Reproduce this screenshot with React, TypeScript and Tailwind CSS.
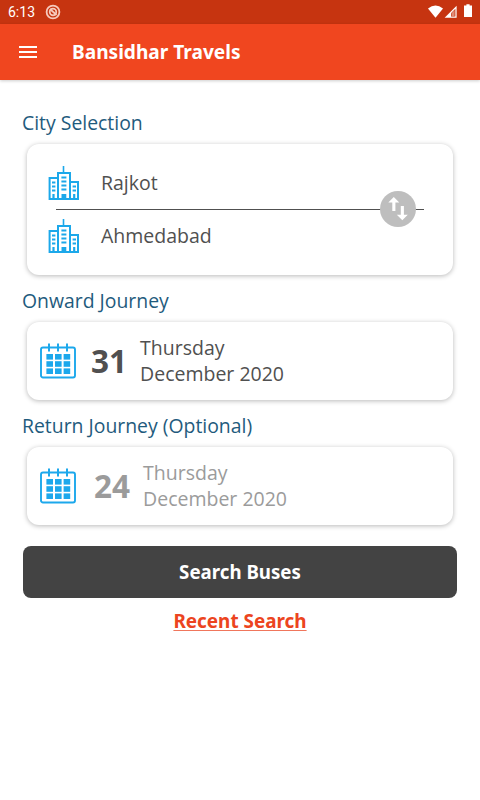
import { useState } from 'react';

const BuildingIcon = () => (
  <svg width="32" height="36" viewBox="0 0 32 36" fill="none" stroke="#1ca8ea" className="shrink-0">
    <path d="M15.5 1V7" strokeWidth="1.6" />
    <path d="M10 34V8H22V34" strokeWidth="2" />
    <path d="M9 13H1.6V34H30V17H22.6" strokeWidth="2" />
    <path d="M13.4 12.5H18.4M13.4 16.5H18.4M13.4 20.5H18.4M13.4 24.5H18.4" strokeWidth="1.8" />
    <path d="M4 17.5H7.4M4 21.5H7.4M4 25.5H7.4M24.6 21.5H28M24.6 25.5H28" strokeWidth="1.8" />
    <path d="M5.5 29V34M26.2 29V34" strokeWidth="2.2" />
    <path d="M15.9 29V34" strokeWidth="4.8" />
  </svg>
);

const CalendarIcon = () => (
  <svg width="36" height="36" viewBox="0 0 36 36" fill="none" stroke="#1ca8ec" className="shrink-0">
    <rect x="1" y="4.5" width="34" height="30" rx="2" strokeWidth="1.9" />
    <path d="M9 0.5V8.5M18 0.5V8.5M27 0.5V8.5" strokeWidth="2" />
    <g fill="#1ca8ec" stroke="none">
      {[11, 18.2, 25.4].map((y) =>
        [6.4, 15, 23.6].map((x) => <rect key={`${x}-${y}`} x={x} y={y} width="6.6" height="5.6" />)
      )}
    </g>
  </svg>
);

const StatusBar = () => (
  <div className="flex h-6 items-center bg-[#c63410] pl-2 pr-2 text-white">
    <span className="font-['Roboto',sans-serif] text-sm leading-6">6:13</span>
    <svg width="16" height="16" viewBox="0 0 16 16" fill="none" stroke="#f6c9bd" className="ml-[10px]">
      <circle cx="8" cy="8" r="6.4" strokeWidth="1.8" />
      <circle cx="8" cy="8" r="3.3" strokeWidth="1.7" />
      <path d="M5 5L11.5 11" strokeWidth="1.8" />
    </svg>
    <svg width="44" height="16" viewBox="0 0 44 16" className="ml-auto">
      <path d="M0 4.6Q7.5 -1.4 15 4.6L7.5 13.7Z" fill="#fff" />
      <path d="M16.6 13.8L28.6 1.8V13.8Z" fill="#fff" />
      <path d="M23 9.2L27.4 4.8V12.6H23Z" fill="#c63410" />
      <path d="M23.6 12.6V9L26.6 6V12.6Z" fill="#df8c78" />
      <path d="M38.4 0.2H41.6V1.5H44V13H36V1.5H38.4Z" fill="#fff" />
    </svg>
  </div>
);

const SectionTitle = ({ title }: { title: string }) => (
  <h2 className="mb-2 h-[26px] text-[19.4px] leading-[26px] text-[#1f5b7d]">{title}</h2>
);

interface DateCardProps {
  day: string;
  weekday: string;
  month: string;
  muted?: boolean;
}

const DateCard = ({ day, weekday, month, muted = false }: DateCardProps) => (
  <button
    className={`mx-[5px] mb-[13px] flex h-[78px] items-center rounded-xl bg-white pl-[13px] text-left shadow-[0_1px_5px_rgba(0,0,0,0.28)] ${
      muted ? 'text-[#9b9b9b]' : 'text-[#505050]'
    }`}
  >
    <CalendarIcon />
    <span className={`text-[31.5px] font-bold ${muted ? 'ml-[18px]' : 'ml-[15px]'}`}>{day}</span>
    <span className="ml-[13px] text-[19.5px] leading-[26px]">
      <span className="block">{weekday}</span>
      <span className="block">{month}</span>
    </span>
  </button>
);

export default function App() {
  const [from, setFrom] = useState('Rajkot');
  const [to, setTo] = useState('Ahmedabad');

  const swapCities = () => {
    setFrom(to);
    setTo(from);
  };

  return (
    <div className="min-h-screen bg-white font-['Open_Sans',sans-serif]">
      <StatusBar />
      <header className="flex h-14 items-center bg-[#f0461f] pl-[19px] text-white shadow-[0_1px_3px_rgba(0,0,0,0.2)]">
        <button aria-label="Menu">
          <svg width="18" height="12" viewBox="0 0 18 12" fill="#fff">
            <path d="M0 0H18V2H0ZM0 5H18V7H0ZM0 10H18V12H0Z" />
          </svg>
        </button>
        <h1 className="ml-[35px] font-['Noto_Sans',sans-serif] text-[19.1px] font-bold">Bansidhar Travels</h1>
      </header>

      <main className="flex flex-col px-[22px] pt-[30px]">
        <SectionTitle title="City Selection" />
        <div className="relative mx-[5px] mb-[13px] h-[131px] rounded-xl bg-white pl-[21px] pr-[29px] pt-[13px] text-[19.5px] text-[#505050] shadow-[0_1px_5px_rgba(0,0,0,0.28)]">
          <div className="flex h-[52px] items-center">
            <BuildingIcon />
            <span className="ml-[21px]">{from}</span>
          </div>
          <div className="ml-2 h-px bg-[#505050]" />
          <div className="flex h-[52px] items-center">
            <BuildingIcon />
            <span className="ml-[21px]">{to}</span>
          </div>
          <button
            aria-label="Swap cities"
            onClick={swapCities}
            className="absolute right-[37px] top-[47px] flex h-9 w-9 items-center justify-center rounded-full bg-[#bebebe]"
          >
            <svg width="36" height="36" viewBox="0 0 36 36" fill="#fff">
              <path d="M13.8 6L19.3 11.4H15.4V20H12.3V11.4H8.3Z" />
              <path d="M22.3 29.2L16.8 23.8H20.8V15H23.9V23.8H27.8Z" />
            </svg>
          </button>
        </div>

        <SectionTitle title="Onward Journey" />
        <DateCard day="31" weekday="Thursday" month="December 2020" />

        <SectionTitle title="Return Journey (Optional)" />
        <DateCard day="24" weekday="Thursday" month="December 2020" muted />

        <button className="mx-px mt-2 h-[52px] rounded-lg bg-[#434343] font-['Noto_Sans',sans-serif] text-[18.7px] font-bold text-white">
          Search Buses
        </button>
        <button className="mt-[10px] self-center font-['Noto_Sans',sans-serif] text-[18.9px] font-bold leading-[26px] text-[#ec4420] underline decoration-[#f0765c] decoration-1 underline-offset-2 [text-decoration-skip-ink:none]">
          Recent Search
        </button>
      </main>
    </div>
  );
}
